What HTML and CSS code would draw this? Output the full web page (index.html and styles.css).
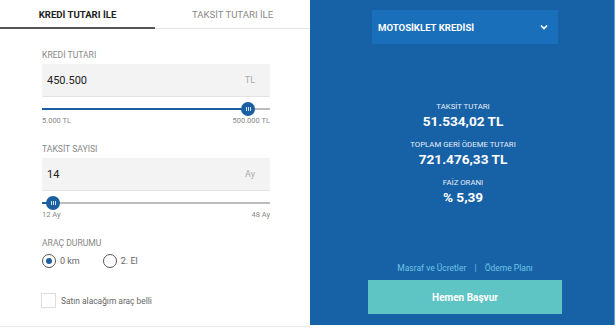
FILE: index.html
```html
<!DOCTYPE html>
<html lang="tr">
<head>
    <meta charset="UTF-8">
    <meta name="viewport" content="width=device-width, initial-scale=1.0">
    <title>Kredi Hesaplama</title>
    <link rel="stylesheet" href="styles.css">
</head>
<body>
    <div class="calculator">
        <div class="form-panel">
            <div class="tabs">
                <div class="tab active">KREDİ TUTARI İLE</div>
                <div class="tab">TAKSİT TUTARI İLE</div>
            </div>

            <div class="form">
                <div class="group first">
                    <div class="label">KREDİ TUTARI</div>
                    <div class="input">
                        <span class="value">450.500</span>
                        <span class="unit">TL</span>
                    </div>
                    <div class="slider">
                        <div class="track"></div>
                        <div class="fill" style="width: 90.4%"></div>
                        <div class="handle" style="left: 90.4%"><span></span><span></span><span></span></div>
                    </div>
                    <div class="range-labels">
                        <span>5.000 TL</span>
                        <span>500.000 TL</span>
                    </div>
                </div>

                <div class="group">
                    <div class="label">TAKSİT SAYISI</div>
                    <div class="input">
                        <span class="value">14</span>
                        <span class="unit">Ay</span>
                    </div>
                    <div class="slider">
                        <div class="track"></div>
                        <div class="fill" style="width: 5%"></div>
                        <div class="handle" style="left: 5%"><span></span><span></span><span></span></div>
                    </div>
                    <div class="range-labels">
                        <span>12 Ay</span>
                        <span>48 Ay</span>
                    </div>
                </div>

                <div class="group state">
                    <div class="label">ARAÇ DURUMU</div>
                    <div class="radios">
                        <label class="radio checked"><span class="circle"></span>0 km</label>
                        <label class="radio"><span class="circle"></span>2. El</label>
                    </div>
                </div>

                <label class="checkbox"><span class="box"></span>Satın alacağım araç belli</label>
            </div>
        </div>

        <div class="result-panel">
            <div class="select">
                <span>MOTOSİKLET KREDİSİ</span>
                <svg class="chevron" width="8" height="6" viewBox="0 0 8 6">
                    <path d="M1 1.5 L4 4.5 L7 1.5" fill="none" stroke="#fff" stroke-width="1.6"/>
                </svg>
            </div>

            <div class="results">
                <div class="result">
                    <div class="result-label">TAKSİT TUTARI</div>
                    <div class="result-value">51.534,02 TL</div>
                </div>
                <div class="result">
                    <div class="result-label">TOPLAM GERİ ÖDEME TUTARI</div>
                    <div class="result-value">721.476,33 TL</div>
                </div>
                <div class="result">
                    <div class="result-label">FAİZ ORANI</div>
                    <div class="result-value">% 5,39</div>
                </div>
            </div>

            <div class="links">
                <a href="#">Masraf ve Ücretler</a>
                <span class="sep">|</span>
                <a href="#">Ödeme Planı</a>
            </div>
            <button class="apply">Hemen Başvur</button>
        </div>
    </div>
</body>
</html>
```

FILE: styles.css
```css
body {
    margin: 0;
    font-family: Roboto, 'Open Sans', sans-serif;
    background-color: #fff;
    color: #333;
}

.calculator {
    display: flex;
    width: 616px;
    height: 328px;
}

.form-panel {
    width: 310px;
    height: 326px;
    border-bottom: 1px solid #e8e8e8;
}

.tabs {
    display: flex;
    height: 28px;
    border-bottom: 1px solid #e4e4e4;
}

.tab {
    width: 155px;
    text-align: center;
    font-size: 9.6px;
    line-height: 30px;
    color: #8a8a8a;
}

.tab.active {
    font-weight: 700;
    color: #222;
    border-bottom: 2px solid #555;
    margin-bottom: -1px;
}

.form {
    padding: 0 40px 0 42px;
}

.group.first {
    margin-top: 21px;
}

.group {
    margin-top: 18px;
}

.label {
    font-size: 8.6px;
    line-height: 11px;
    color: #888;
    margin-bottom: 3px;
}

.input {
    display: flex;
    justify-content: space-between;
    align-items: center;
    height: 33px;
    padding: 0 15px 0 5px;
    background: #f3f3f3;
    border-bottom: 1px solid #e2e2e2;
    box-sizing: border-box;
}

.input .value {
    font-size: 11px;
    color: #222;
}

.input .unit {
    font-size: 9px;
    color: #aaa;
}

.slider {
    position: relative;
    height: 20px;
    margin-top: 2px;
}

.track {
    position: absolute;
    left: 0;
    right: 0;
    top: 9px;
    height: 2px;
    background: #bdbdbd;
}

.fill {
    position: absolute;
    left: 0;
    top: 9px;
    height: 2px;
    background: #1b5fa3;
}

.handle {
    position: absolute;
    top: 3px;
    width: 14px;
    height: 14px;
    margin-left: -7px;
    border-radius: 50%;
    background: #1b5fa3;
    display: flex;
    justify-content: center;
    align-items: center;
    gap: 1px;
}

.handle span {
    width: 1px;
    height: 4px;
    background: #cfe0f2;
}

.range-labels {
    display: flex;
    justify-content: space-between;
    font-size: 7.5px;
    line-height: 10px;
    color: #888;
    margin-top: -3px;
}

.group.state {
    margin-top: 18px;
}

.radios {
    display: flex;
    gap: 23px;
    margin-top: 5px;
}

.radio {
    display: flex;
    align-items: center;
    gap: 4px;
    font-size: 9px;
    color: #666;
}

.circle {
    width: 12px;
    height: 12px;
    border: 1px solid #555;
    border-radius: 50%;
    display: flex;
    justify-content: center;
    align-items: center;
}

.radio.checked .circle::after {
    content: "";
    width: 6px;
    height: 6px;
    border-radius: 50%;
    background: #1b5fa3;
}

.checkbox {
    display: flex;
    align-items: center;
    gap: 5px;
    margin-top: 25px;
    margin-left: -1px;
    font-size: 8.4px;
    color: #666;
}

.box {
    width: 13px;
    height: 13px;
    border: 1px solid #ddd;
}

.result-panel {
    width: 304px;
    height: 325px;
    background: #1762a7;
    color: #fff;
    display: flex;
    flex-direction: column;
    align-items: center;
    border-right: 1px solid #6b9fd0;
}

.select {
    display: flex;
    justify-content: space-between;
    align-items: center;
    width: 186px;
    height: 34px;
    margin: 10px 0 0 6px;
    padding: 0 10px 0 6px;
    box-sizing: border-box;
    background: #1a6fba;
    font-size: 9.6px;
    font-weight: 700;
}

.results {
    margin-top: 57px;
    margin-left: 2px;
    text-align: center;
}

.result {
    margin-bottom: 9px;
}

.result-label {
    font-size: 7.8px;
    line-height: 11px;
    color: #e6eef7;
}

.result-value {
    font-size: 13.6px;
    font-weight: 700;
    line-height: 18px;
}

.links {
    margin-top: auto;
    margin-left: 6px;
    font-size: 8.5px;
    color: #6fc2e4;
}

.links a {
    color: #6fc2e4;
    text-decoration: none;
}

.sep {
    margin: 0 6px;
}

.apply {
    width: 194px;
    height: 34px;
    margin: 7px 0 11px 6px;
    border: none;
    background: #5ec4c4;
    color: #fff;
    font-family: inherit;
    font-size: 10px;
    font-weight: 700;
}
```
